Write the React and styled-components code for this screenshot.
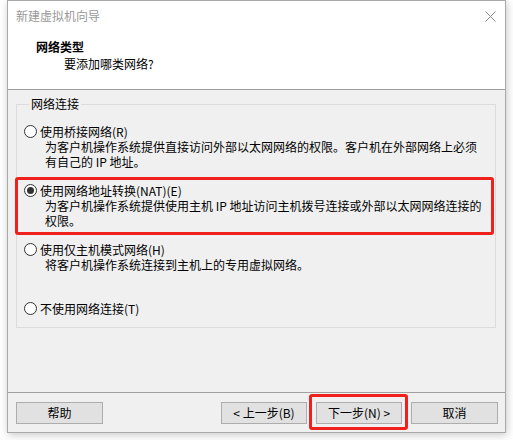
import React, { useState } from "react";
import styled, { createGlobalStyle } from "styled-components";

const FONT = `"Noto Sans CJK SC", "Microsoft YaHei", sans-serif`;

const GlobalStyle = createGlobalStyle`
  html, body {
    margin: 0;
    padding: 0;
    background: #ffffff;
  }
  body {
    font-family: ${FONT};
    font-size: 12px;
    color: #000;
  }
  * {
    box-sizing: border-box;
  }
`;

const Page = styled.div`
  width: 513px;
  height: 440px;
  padding-left: 7px;
`;

const Window = styled.div`
  width: 499px;
  height: 433px;
  border: 1px solid #a9a9a9;
  background: #f0f0f0;
  box-shadow: 1px 2px 8px rgba(0, 0, 0, 0.22);
  display: flex;
  flex-direction: column;
`;

const TitleBar = styled.div`
  height: 30px;
  flex-shrink: 0;
  background: #ffffff;
  display: flex;
  align-items: center;
  justify-content: space-between;
  padding: 0 9px 0 8px;
`;

const Title = styled.span`
  color: #999999;
  font-size: 12px;
  line-height: 16px;
`;

const CloseBtn = styled.div`
  width: 12px;
  height: 12px;
  display: flex;
  align-items: center;
  justify-content: center;
`;

const Header = styled.div`
  height: 59px;
  flex-shrink: 0;
  background: #ffffff;
  border-bottom: 1px solid #a0a0a0;
  padding: 7px 0 0 28px;
`;

const HeaderTitle = styled.div`
  font-weight: 700;
  line-height: 17px;
`;

const HeaderSub = styled.div`
  line-height: 17px;
  padding-left: 28px;
`;

const Body = styled.div`
  flex: 1;
  display: flex;
  flex-direction: column;
`;

const GroupBox = styled.fieldset`
  margin: 6px 8px 0;
  width: 480px;
  border: 1px solid #dcdcdc;
  padding: 12px 0 11px 7px;
`;

const Legend = styled.legend`
  margin-left: 5px;
  padding: 0 2px;
  line-height: 16px;
`;

const Option = styled.div`
  position: relative;
  height: ${(p) => (p.$last ? "auto" : "59px")};

  ${(p) =>
    p.$highlight &&
    `
    &::after {
      content: "";
      position: absolute;
      left: -9px;
      top: -6px;
      width: 473px;
      height: 52px;
      border: 3px solid #f0201c;
      border-radius: 3px;
      pointer-events: none;
    }
  `}
`;

const OptionLabel = styled.label`
  display: flex;
  align-items: center;
  gap: 3px;
  line-height: 15px;
  cursor: default;
`;

const Radio = styled.input.attrs({ type: "radio" })`
  appearance: none;
  margin: 0;
  width: 13px;
  height: 13px;
  border: 1px solid #333333;
  border-radius: 50%;
  background: #ffffff;
  display: grid;
  place-content: center;

  &::before {
    content: "";
    width: 7px;
    height: 7px;
    border-radius: 50%;
    background: #333333;
    transform: scale(0);
  }

  &:checked::before {
    transform: scale(1);
  }
`;

const Desc = styled.div`
  padding-left: 21px;
  line-height: 15px;
  width: 463px;
`;

const Spacer = styled.div`
  flex: 1;
`;

const Footer = styled.div`
  border-top: 1px solid #a0a0a0;
  padding: 9px 7px 8px 8px;
  display: flex;
  align-items: center;
`;

const NavGroup = styled.div`
  margin-left: auto;
  display: flex;
  gap: 9px;
`;

const ButtonSlot = styled.div`
  position: relative;
  display: flex;

  ${(p) =>
    p.$highlight &&
    `
    &::after {
      content: "";
      position: absolute;
      top: -8px;
      bottom: -6px;
      left: -7px;
      right: -6px;
      border: 3px solid #f0201c;
      border-radius: 3px;
      pointer-events: none;
    }
  `}
`;

const Button = styled.button`
  width: ${(p) => p.$w || 86}px;
  height: 22px;
  padding: 0;
  background: #e1e1e1;
  border: 1px solid #adadad;
  font-family: ${FONT};
  font-size: 12px;
  line-height: 16px;
  color: #000;
`;

const options = [
  {
    id: "bridge",
    label: "使用桥接网络(R)",
    desc: "为客户机操作系统提供直接访问外部以太网网络的权限。客户机在外部网络上必须有自己的 IP 地址。",
  },
  {
    id: "nat",
    label: "使用网络地址转换(NAT)(E)",
    desc: "为客户机操作系统提供使用主机 IP 地址访问主机拨号连接或外部以太网网络连接的权限。",
  },
  {
    id: "host",
    label: "使用仅主机模式网络(H)",
    desc: "将客户机操作系统连接到主机上的专用虚拟网络。",
  },
  { id: "none", label: "不使用网络连接(T)" },
];

const App = () => {
  const [net, setNet] = useState("nat");

  return (
    <Page>
      <GlobalStyle />
      <Window>
        <TitleBar>
          <Title>新建虚拟机向导</Title>
          <CloseBtn>
            <svg width="11" height="11" viewBox="0 0 11 11">
              <path d="M0.5 0.5 L10.5 10.5 M10.5 0.5 L0.5 10.5" stroke="#8a8a8a" strokeWidth="1" fill="none" />
            </svg>
          </CloseBtn>
        </TitleBar>
        <Header>
          <HeaderTitle>网络类型</HeaderTitle>
          <HeaderSub>要添加哪类网络?</HeaderSub>
        </Header>
        <Body>
          <GroupBox>
            <Legend>网络连接</Legend>
            {options.map((o, i) => (
              <Option key={o.id} $highlight={o.id === "nat"} $last={i === options.length - 1}>
                <OptionLabel>
                  <Radio name="net" checked={net === o.id} onChange={() => setNet(o.id)} />
                  {o.label}
                </OptionLabel>
                {o.desc && <Desc>{o.desc}</Desc>}
              </Option>
            ))}
          </GroupBox>
          <Spacer />
          <Footer>
            <Button $w={87}>帮助</Button>
            <NavGroup>
              <Button>&lt; 上一步(B)</Button>
              <ButtonSlot $highlight>
                <Button>下一步(N) &gt;</Button>
              </ButtonSlot>
              <Button $w={87}>取消</Button>
            </NavGroup>
          </Footer>
        </Body>
      </Window>
    </Page>
  );
};

export default App;
